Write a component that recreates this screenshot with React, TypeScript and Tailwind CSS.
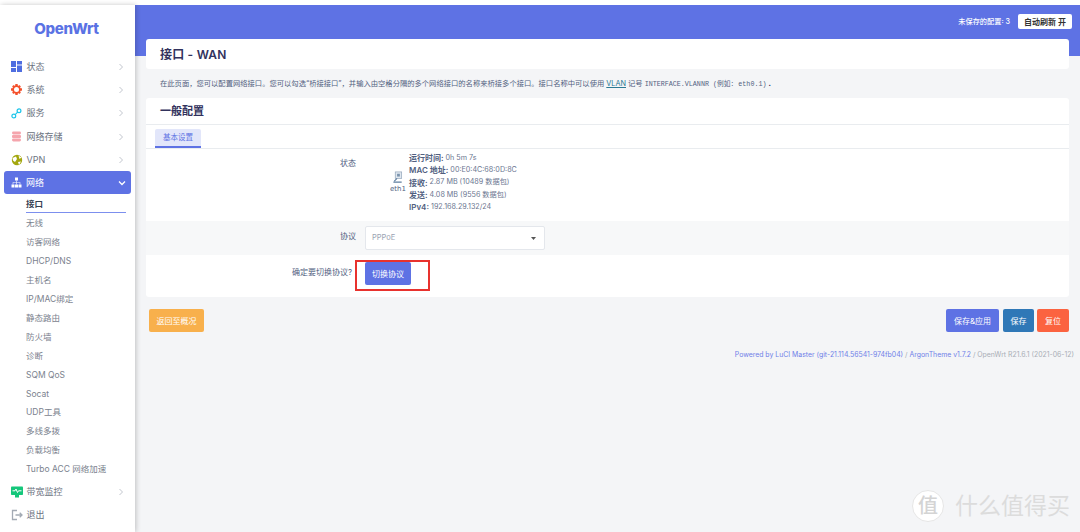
import React from "react";

const font = { fontFamily: 'Inter, "Noto Sans CJK SC", sans-serif' };

function Chevron({ open = false, className = "" }: { open?: boolean; className?: string }) {
  return (
    <svg width="8" height="8" viewBox="0 0 8 8" fill="none" stroke="currentColor" strokeWidth={open ? 1.3 : 0.9} className={className}>
      {open ? <path d="M1 2.5 L4 5.5 L7 2.5" /> : <path d="M2.5 1 L5.5 4 L2.5 7" />}
    </svg>
  );
}

const icons: Record<string, React.ReactNode> = {
  status: (
    <svg width="11" height="11" viewBox="0 0 11 11" fill="#4f6ee0">
      <rect x="0" y="0" width="5" height="6" /><rect x="6" y="0" width="5" height="3.5" />
      <rect x="0" y="7" width="5" height="4" /><rect x="6" y="4.5" width="5" height="6.5" />
    </svg>
  ),
  system: (
    <svg width="11" height="11" viewBox="0 0 11 11">
      <g fill="#f4512c">
        <circle cx="5.5" cy="5.5" r="4.3" />
        <rect x="4.3" y="0" width="2.4" height="11" />
        <rect x="0" y="4.3" width="11" height="2.4" />
        <rect x="4.5" y="0.3" width="2" height="10.4" transform="rotate(45 5.5 5.5)" />
        <rect x="4.5" y="0.3" width="2" height="10.4" transform="rotate(-45 5.5 5.5)" />
      </g>
      <circle cx="5.5" cy="5.5" r="2.5" fill="#fff" />
    </svg>
  ),
  service: (
    <svg width="11" height="11" viewBox="0 0 11 11" fill="none" stroke="#1dc5ea" strokeWidth="1.2">
      <circle cx="2.8" cy="8" r="1.9" /><circle cx="8" cy="2.8" r="1.9" />
      <path d="M4.2 6.6 L6.6 4.2" />
    </svg>
  ),
  storage: (
    <svg width="11" height="11" viewBox="0 0 11 11" fill="#f5a5ad">
      <rect x="1" y="0.5" width="9" height="3" rx="1.4" /><rect x="1" y="4" width="9" height="3" rx="1" /><rect x="1" y="7.5" width="9" height="3" rx="1.4" />
    </svg>
  ),
  vpn: (
    <svg width="12" height="12" viewBox="0 0 12 12">
      <circle cx="6" cy="6" r="5.2" fill="#a3a70f" />
      <path d="M1.5 4 L5 2.5 L6 5 L4 8 L2 6.5Z M7.5 1.5 L10.5 3.5 L8.5 5 Z M7 8 L10 7.5 L8 11Z" fill="#fff" />
    </svg>
  ),
  network: (
    <svg width="11" height="11" viewBox="0 0 11 11" fill="#fff">
      <rect x="4" y="0.5" width="3" height="3" /><rect x="0.5" y="7.5" width="3" height="3" /><rect x="4" y="7.5" width="3" height="3" /><rect x="7.5" y="7.5" width="3" height="3" />
      <path d="M5.2 3.5h.6V5.2H9.3V7.5h-.6V5.8H5.8V7.5h-.6V5.8H2.3V7.5h-.6V5.2H5.2Z" />
    </svg>
  ),
  monitor: (
    <svg width="12" height="12" viewBox="0 0 12 12">
      <rect x="0" y="0.5" width="12" height="8.5" rx="0.8" fill="#15c77b" />
      <rect x="4" y="9" width="4" height="2.5" fill="#15c77b" />
      <path d="M1.5 4.8 H4 L5 3 L6.5 6.5 L7.5 4.8 H10.5" stroke="#fff" strokeWidth="1" fill="none" />
    </svg>
  ),
  logout: (
    <svg width="12" height="12" viewBox="0 0 12 12" fill="none" stroke="#a3aab4" strokeWidth="1.3">
      <path d="M6 1.5H1.5V10.5H6" /><path d="M4.5 6H11M8.7 3.8 L11 6 L8.7 8.2" />
    </svg>
  ),
};

function NavRow({ icon, label, chevron = true }: { icon: string; label: string; chevron?: boolean }) {
  return (
    <div className="flex h-[23.3px] items-center pl-[11px] pr-[10px] text-[9px] text-[#6b7280]">
      <span className="flex w-[15px] shrink-0 items-center">{icons[icon]}</span>
      <span className="ml-[0.5px] flex-1 whitespace-nowrap">{label}</span>
      {chevron && <Chevron className="text-[#b9bec6]" />}
    </div>
  );
}

const subItems = ["无线", "访客网络", "DHCP/DNS", "主机名", "IP/MAC绑定", "静态路由", "防火墙", "诊断", "SQM QoS", "Socat", "UDP工具", "多线多拨", "负载均衡", "Turbo ACC 网络加速"];

const statusRows: [string, string][] = [
  ["运行时间:", "0h 5m 7s"],
  ["MAC 地址:", "00:E0:4C:68:0D:8C"],
  ["接收:", "2.87 MB (10489 数据包)"],
  ["发送:", "4.08 MB (9556 数据包)"],
  ["IPv4:", "192.168.29.132/24"],
];

function Sidebar() {
  return (
    <aside className="z-10 flex w-[135px] shrink-0 flex-col bg-white shadow-[1px_0_5px_rgba(0,0,0,0.22)]">
      <div className="flex h-[50px] items-start justify-center pt-[15px] pr-[2px]">
        <span className="text-[15px] leading-[18px] font-extrabold tracking-[-0.3px] text-[#5a72e4]">OpenWrt</span>
      </div>
      <div>
        <NavRow icon="status" label="状态" />
        <NavRow icon="system" label="系统" />
        <NavRow icon="service" label="服务" />
        <NavRow icon="storage" label="网络存储" />
        <NavRow icon="vpn" label="VPN" />
      </div>
      <div className="mx-[4px] flex h-[23px] items-center rounded-[3px] bg-[#5e72e4] pl-[7px] pr-[5px] text-[9px] text-white">
        <span className="flex w-[15px] shrink-0 items-center">{icons.network}</span>
        <span className="flex-1">网络</span>
        <Chevron open className="text-white" />
      </div>
      <div className="ml-[26px] mr-[9px] mt-[1px]">
        <div className="flex h-[18px] items-center border-b-[1.5px] border-[#7c8fee] text-[8.5px] font-semibold text-[#374151]">接口</div>
        <div className="mt-[0.5px]">
          {subItems.map((s) => (
            <div key={s} className="flex h-[18.95px] items-center whitespace-nowrap text-[8.5px] text-[#7b828e]">{s}</div>
          ))}
        </div>
      </div>
      <div className="mt-[1px]">
        <NavRow icon="monitor" label="带宽监控" />
        <NavRow icon="logout" label="退出" chevron={false} />
      </div>
    </aside>
  );
}

function Btn({ label, cls }: { label: string; cls: string }) {
  return (
    <div className={`flex h-[23px] items-center justify-center rounded-[2px] text-[8px] text-white ${cls}`}>{label}</div>
  );
}

function Main() {
  return (
    <main className="relative min-w-0 flex-1 bg-[#f4f5f7]">
      <header className="flex h-[51px] items-start justify-end bg-[#5e72e4] pt-[9px] pr-[8px]">
        <span className="mt-[2px] mr-[8px] text-[7.2px] leading-[11px] font-medium text-white">未保存的配置: 3</span>
        <div className="flex h-[15px] w-[54px] items-center justify-center rounded-[2px] bg-white text-[8px] font-semibold text-[#333]">自动刷新 开</div>
      </header>
      <div className="-mt-[17px] px-[11px]">
        <div className="flex h-[30px] items-center rounded-[3px] bg-white pl-[14px] pt-[1px] text-[12px] font-semibold tracking-[0.2px] text-[#32325d]">接口 - WAN</div>
        <p className="mt-[10px] flex h-[11px] items-center whitespace-nowrap pl-[14px] text-[7.3px] text-[#525f7f]">
          在此页面，您可以配置网络接口。您可以勾选“桥接接口”，并输入由空格分隔的多个网络接口的名称来桥接多个接口。接口名称中可以使用&nbsp;
          <span className="text-[#2b7a94] underline">VLAN</span>&nbsp;记号&nbsp;
          <span className="text-[6.7px]" style={{ fontFamily: '"Liberation Mono", "Noto Sans CJK SC", monospace' }}>INTERFACE.VLANNR (例如: eth0.1)</span>&nbsp;<b className="text-[#32325d]">.</b>
        </p>
        <section className="mt-[8px] rounded-[3px] bg-white">
          <h3 className="flex h-[27px] items-center border-b border-[#e9ecef] pl-[14px] pt-[1px] text-[11px] font-semibold text-[#32325d]">一般配置</h3>
          <div className="flex h-[24px] items-end border-b border-[#e9ecef] pl-[9px]">
            <div className="flex h-[19px] w-[46px] items-center justify-center rounded-t-[2px] border-b-2 border-[#5e72e4] bg-[#e2e6fa] text-[7.5px] text-[#5e72e4]">基本设置</div>
          </div>
          <div className="flex h-[72px]">
            <div className="w-[219px] pt-[9px] pr-[9px] text-right text-[8px] leading-[11px] text-[#525f7f]">状态</div>
            <div className="flex w-[44px] flex-col items-center pl-[22px] pt-[22px]">
              <svg width="12" height="12" viewBox="0 0 12 13" className="shrink-0">
                <rect x="3" y="1" width="7" height="7" fill="#dfe7ef" stroke="#8b9fb5" strokeWidth="0.7" />
                <rect x="5" y="3" width="3" height="3" fill="#7b93ad" />
                <path d="M5 8 L2 11 M1 12 h9" stroke="#5f7f9f" strokeWidth="1.2" />
              </svg>
              <span className="mt-[2px] text-[7px] leading-[9px] text-[#525f7f]" style={{ fontFamily: '"DejaVu Sans", sans-serif' }}>eth1</span>
            </div>
            <div className="pt-[3px] text-[7.2px] whitespace-nowrap text-[#6b7690]">
              {statusRows.map(([k, v]) => (
                <div key={k} className="flex h-[12.3px] items-center gap-[2px]">
                  <b className="text-[8px] font-semibold text-[#525f7f]">{k}</b>
                  <span>{v}</span>
                </div>
              ))}
            </div>
          </div>
          <div className="flex h-[34px] items-center bg-[#f7f8f9]">
            <div className="w-[219px] -translate-y-[2px] pr-[9px] text-right text-[8px] text-[#525f7f]">协议</div>
            <div className="flex h-[24px] w-[180px] items-center justify-between rounded-[2px] border border-[#e4e7ec] bg-white pl-[6px] pr-[8px] text-[7.5px] text-[#9aa3b2]">
              PPPoE
              <svg width="5" height="3" viewBox="0 0 5 3" fill="#555"><path d="M0 0h5L2.5 3z" /></svg>
            </div>
          </div>
          <div className="flex h-[42px] pt-[7px]">
            <div className="flex h-[20px] w-[206px] items-center justify-end text-[8px] text-[#525f7f]">确定要切换协议?</div>
            <div className="relative ml-[13px]">
              <div className="flex h-[23px] w-[46px] items-center justify-center rounded-[2px] bg-[#5e72e4] text-[8px] text-white">切换协议</div>
              <div className="absolute -left-[10px] -top-[2px] h-[31px] w-[75px] border-2 border-[#e8322e]" />
            </div>
          </div>
        </section>
        <div className="mt-[12px] flex items-center justify-between pl-[3px]">
          <Btn label="返回至概况" cls="w-[55px] bg-[#f8b04c]" />
          <div className="flex">
            <Btn label="保存&应用" cls="w-[53px] bg-[#5e72e4]" />
            <Btn label="保存" cls="ml-[4px] w-[31px] bg-[#2f78b7]" />
            <Btn label="复位" cls="ml-[3px] w-[32px] bg-[#fb6340]" />
          </div>
        </div>
        <div className="-mr-[5px] mt-[17px] whitespace-nowrap text-right text-[6.9px] leading-[11px] text-[#a9aeb6]">
          <span className="text-[#6f7fe8]">Powered by LuCI Master (git-21.114.56541-974fb04)</span> / <span className="text-[#6f7fe8]">ArgonTheme v1.7.2</span> / OpenWrt R21.6.1 (2021-06-12)
        </div>
      </div>
      <div className="pointer-events-none absolute bottom-[10px] right-[10px] flex items-center gap-[11px]">
        <span className="flex h-[32px] w-[32px] items-center justify-center rounded-full border border-[#e6e6e6] bg-white text-[20px] leading-none font-medium text-[#d4d4d4]">值</span>
        <span className="text-[23px] leading-none font-normal text-[#dcdcdc]">什么值得买</span>
      </div>
    </main>
  );
}

export default function App() {
  return (
    <div className="flex h-[532px] w-[1080px] flex-col overflow-hidden bg-white" style={font}>
      <div className="h-[5px] shrink-0 bg-white" />
      <div className="flex min-h-0 flex-1">
        <Sidebar />
        <Main />
      </div>
    </div>
  );
}
